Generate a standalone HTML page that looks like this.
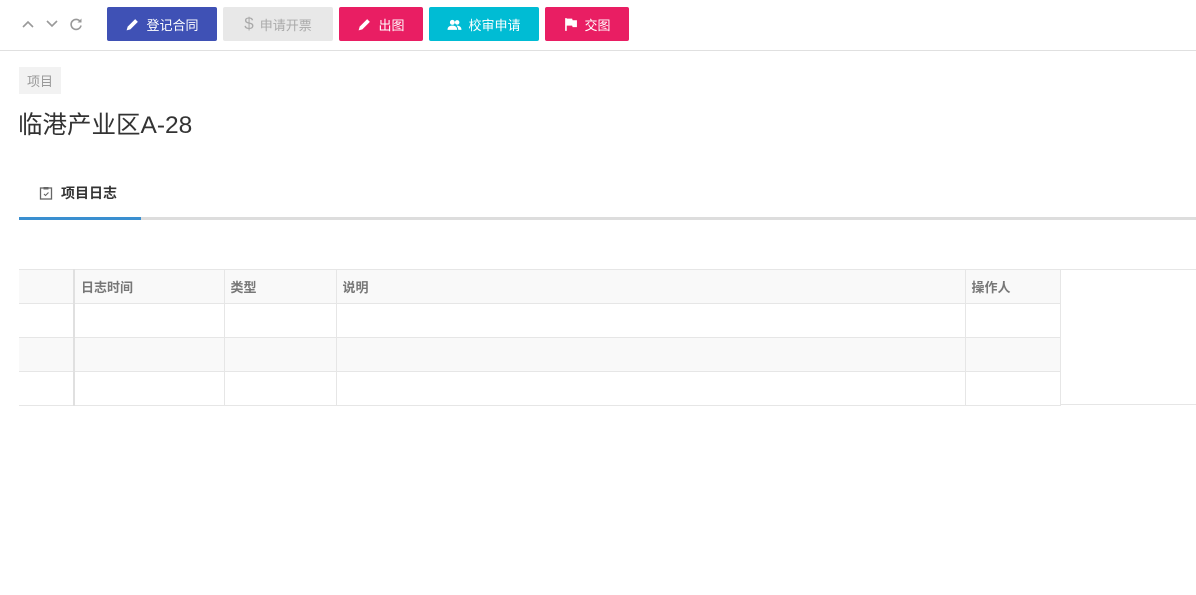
<!DOCTYPE html>
<html><head><meta charset="utf-8"><style>
*{box-sizing:border-box;margin:0;padding:0}
body{width:1196px;height:595px;background:#fff;font-family:"Liberation Sans","Noto Sans CJK SC",sans-serif;position:relative;overflow:hidden;color:#333}
.top{position:absolute;left:0;top:0;width:1196px;height:51px;border-bottom:1px solid #e0e0e0}
.btn{position:absolute;top:7px;height:34px;border-radius:2px;color:#fff;font-size:13px;display:flex;align-items:center;justify-content:center;gap:6px}
.btn svg{width:15px;height:15px}
.nav{position:absolute;top:16px;color:#999}
.tag{position:absolute;left:19px;top:67px;width:42px;height:27px;background:#f2f2f2;color:#999;font-size:13px;display:flex;align-items:center;justify-content:center}
h1{position:absolute;left:18px;top:106px;font-size:24.5px;font-weight:normal;color:#333}
.tab{position:absolute;left:39px;top:183px;font-size:14px;font-weight:bold;color:#333;display:flex;align-items:center;gap:8px}
.bar{position:absolute;left:19px;top:217px;width:1177px;height:3px;background:#ddd}
.bar i{position:absolute;left:0;top:0;width:122px;height:3px;background:#3a8fd0}
table{position:absolute;left:19px;top:269px;border-collapse:collapse;font-size:13px}
td{height:34px;border:1px solid #e6e6e6;padding-left:6px;color:#777;font-weight:bold}
tr.h td,tr.s td{background:#f9f9f9}
.rline{position:absolute;left:1060px;width:136px;height:1px;background:#e6e6e6}
</style></head><body>
<div class="top">
<svg class="nav" style="left:20px" width="16" height="16" viewBox="0 0 16 16"><path d="M3 11l5-5 5 5" fill="none" stroke="#999" stroke-width="1.6"/></svg>
<svg class="nav" style="left:44px" width="16" height="16" viewBox="0 0 16 16"><path d="M3 5l5 5 5-5" fill="none" stroke="#999" stroke-width="1.6"/></svg>
<svg class="nav" style="left:68px" width="16" height="16" viewBox="0 0 16 16"><path d="M12.5 6A5 5 0 1 0 13 9.5" fill="none" stroke="#999" stroke-width="1.6"/><path d="M13.5 2.5v4h-4z" fill="#999"/></svg>
<div class="btn" style="left:107px;width:110px;background:#3f51b5"><svg viewBox="0 0 14 14"><path d="M1.5 12.5l1-3.5 7-7 2.5 2.5-7 7z" fill="#fff"/></svg>登记合同</div>
<div class="btn" style="left:223px;width:110px;background:#e8e8e8;color:#aaa"><span style="font-size:17px;color:#aaa">$</span>申请开票</div>
<div class="btn" style="left:339px;width:84px;background:#e91e63"><svg viewBox="0 0 14 14"><path d="M1.5 12.5l1-3.5 7-7 2.5 2.5-7 7z" fill="#fff"/></svg>出图</div>
<div class="btn" style="left:429px;width:110px;background:#00bcd4"><svg viewBox="0 0 14 14"><circle cx="5" cy="5" r="2.3" fill="#fff"/><circle cx="9.5" cy="5" r="2.1" fill="#fff"/><path d="M0.5 12c0-3 2-4 4.5-4s4.5 1 4.5 4zM9 8c2.5 0 4.5 1 4.5 4h-3c0-2-1-3-1.5-4z" fill="#fff"/></svg>校审申请</div>
<div class="btn" style="left:545px;width:84px;background:#e91e63"><svg viewBox="0 0 14 14"><path d="M2 1h1.5v12H2zM3.5 1.5h5l.5 1.5h4v6.5h-4l-.5-1.5h-5z" fill="#fff"/></svg>交图</div>
</div>
<div class="tag">项目</div>
<h1>临港产业区A-28</h1>
<div class="tab"><svg width="14" height="14" viewBox="0 0 14 14"><rect x="1.5" y="2" width="11" height="11" fill="none" stroke="#666" stroke-width="1.3"/><rect x="4.5" y="1" width="5" height="2.5" fill="#666"/><path d="M5 8l1.5 1.5 3-3" fill="none" stroke="#666" stroke-width="1.1"/></svg>项目日志</div>
<div class="bar"><i></i></div>
<table>
<tr class="h"><td style="width:55px;border-left:none;border-right:2px solid #e0e0e0"></td><td style="width:150px">日志时间</td><td style="width:112px">类型</td><td style="width:629px">说明</td><td style="width:95px">操作人</td></tr>
<tr><td style="border-left:none;border-right:2px solid #e0e0e0"></td><td></td><td></td><td></td><td></td></tr>
<tr class="s"><td style="border-left:none;border-right:2px solid #e0e0e0"></td><td></td><td></td><td></td><td></td></tr>
<tr><td style="border-left:none;border-right:2px solid #e0e0e0"></td><td></td><td></td><td></td><td></td></tr>
</table>
<div class="rline" style="top:269px"></div>
<div class="rline" style="top:404px"></div>
</body></html>
